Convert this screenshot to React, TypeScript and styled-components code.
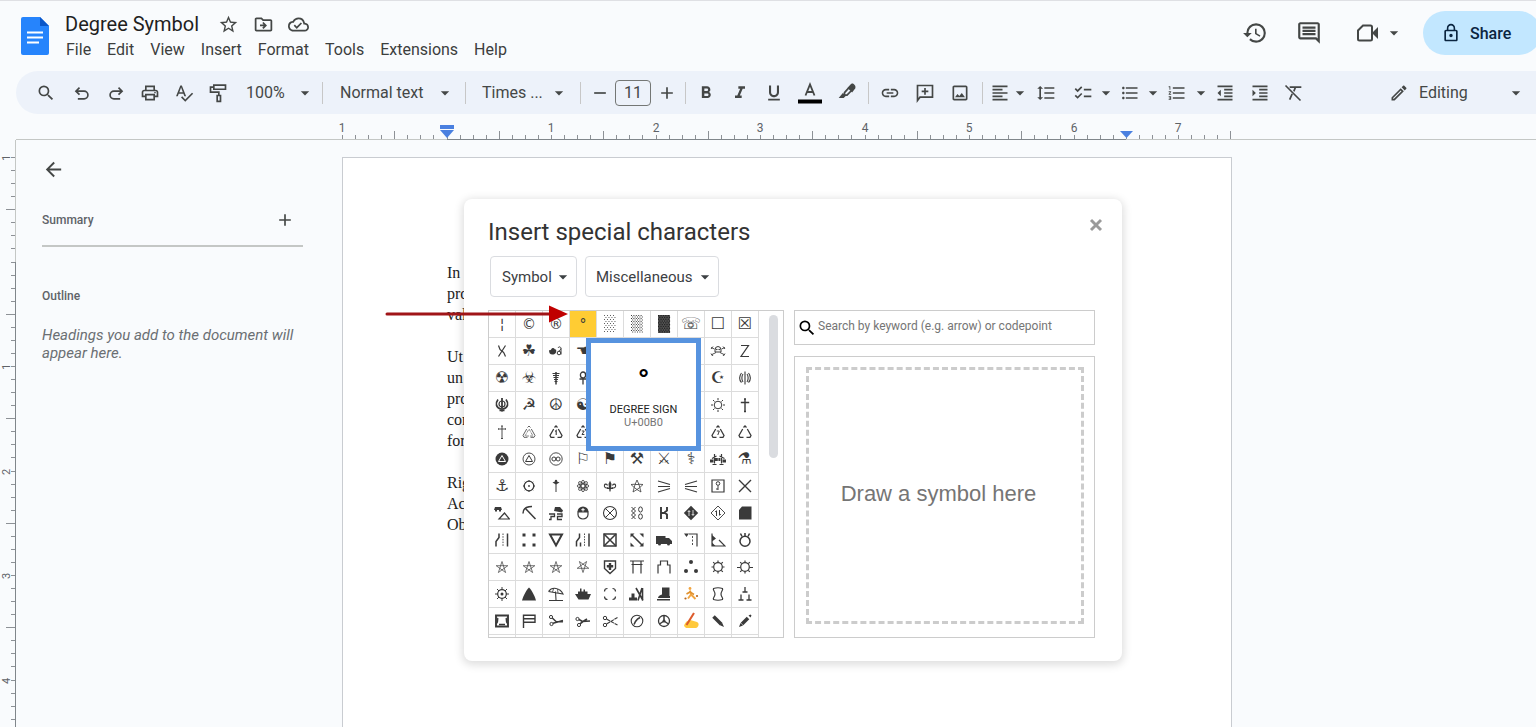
import React from "react";
import styled, { createGlobalStyle, css } from "styled-components";
import {
  MdSearch, MdOutlinePrint, MdSpellcheck, MdFormatBold, MdFormatItalic, MdFormatUnderlined,
  MdLink, MdOutlineImage, MdFormatAlignLeft, MdFormatLineSpacing, MdChecklist, MdFormatListBulleted,
  MdFormatListNumbered, MdFormatIndentDecrease, MdFormatIndentIncrease, MdOutlineEdit, MdArrowBack,
  MdAdd, MdRemove, MdArrowDropDown, MdStarBorder, MdOutlineDriveFileMove, MdOutlineCloudDone,
  MdHistory, MdOutlineComment, MdLockOutline,
} from "react-icons/md";

const GlobalStyle = createGlobalStyle`
  * { box-sizing: border-box; }
  body { margin: 0; background: #f9fbfd; font-family: Roboto, "Liberation Sans", sans-serif; color: #444746; }
  button, input, select { font: inherit; color: inherit; }
  button { border: 0; padding: 0; background: none; cursor: pointer; }
  h1, h2, h3, p { margin: 0; font-weight: 400; }
`;

/* ---------- shell ---------- */

const Shell = styled.div`
  height: 100vh;
  display: flex;
  flex-direction: column;
  overflow: hidden;
  border-top: 1px solid #dfe0e4;
`;

const Header = styled.header`
  display: flex;
  align-items: flex-start;
  height: 70px;
  flex: none;
  padding: 10px 0 0 21px;
  margin-right: -5px;
`;

const DocLogo = styled.svg`
  flex: none;
  width: 28px;
  height: 38px;
  margin: 6px 16px 0 0;
`;

const TitleBlock = styled.div`
  flex: 1;
`;

const TitleRow = styled.div`
  display: flex;
  align-items: center;
  height: 26px;
  gap: 14px;
`;

const DocTitle = styled.h1`
  font-size: 20px;
  line-height: 26px;
  color: #1f1f1f;
  margin-right: 5px;
`;

const PlainIconButton = styled.button`
  display: flex;
  align-items: center;
  justify-content: center;
  font-size: 21px;
  color: #444746;
`;

const MenuBar = styled.nav`
  display: flex;
  gap: 16px;
  padding-left: 1px;
`;

const MenuItem = styled.button`
  font-size: 16px;
  line-height: 25px;
  color: #3c3e3d;
`;

const HeaderActions = styled.div`
  display: flex;
  align-items: center;
  height: 44px;
`;

const HeaderIcon = styled(PlainIconButton)`
  width: 54px;
  font-size: 26px;
`;

const MeetButton = styled(PlainIconButton)`
  width: 52px;
  margin: 0 18px 0 17px;
  gap: 5px;
  font-size: 20px;
`;

const ShareButton = styled.button`
  display: flex;
  align-items: center;
  gap: 9px;
  width: 118px;
  height: 44px;
  padding-left: 18px;
  border-radius: 22px;
  background: #c2e7ff;
  color: #0a2540;
  font-size: 16px;
  font-weight: 500;
  svg { font-size: 20px; }
`;

/* ---------- toolbar ---------- */

const Toolbar = styled.div`
  display: flex;
  align-items: center;
  flex: none;
  height: 43px;
  margin-left: 16px;
  padding: 0 10px;
  border-radius: 22px 0 0 22px;
  background: #edf2fa;
  font-size: 16px;
`;

const Tool = styled.button<{ $w?: number }>`
  display: flex;
  align-items: center;
  justify-content: center;
  flex: none;
  width: ${(p) => p.$w ?? 34}px;
  height: 34px;
  font-size: 20px;
  color: #444746;
  svg { flex: none; }
`;

const ToolGroup = styled.div<{ $end?: number }>`
  display: flex;
  align-items: center;
  flex: none;
  padding: 0 ${(p) => p.$end ?? 3}px 0 3px;
`;

const Divider = styled.span`
  flex: none;
  width: 1px;
  height: 22px;
  background: #c7c7c7;
`;

const SelectWrap = styled.label<{ $w: number; $pad: number; $after: number; $boxed?: boolean }>`
  display: grid;
  align-items: center;
  flex: none;
  width: ${(p) => p.$w}px;
  height: 34px;
  margin-right: ${(p) => p.$after}px;
  select {
    grid-area: 1 / 1;
    appearance: none;
    width: 100%;
    height: 100%;
    border: 0;
    outline: 0;
    background: transparent;
    padding: 0 0 0 ${(p) => p.$pad}px;
  }
  svg {
    grid-area: 1 / 1;
    justify-self: end;
    pointer-events: none;
    font-size: 20px;
  }
  ${(p) =>
    p.$boxed &&
    css`
      height: 41px;
      border: 1px solid #dadce0;
      border-radius: 4px;
      font-size: 15px;
      color: #3c4043;
      svg { margin-right: 3px; }
    `}
`;

const SizeInput = styled.input`
  width: 36px;
  height: 26px;
  border: 1px solid #747775;
  border-radius: 4px;
  background: transparent;
  text-align: center;
  padding: 0;
`;

const Spacer = styled.span`
  flex: 1;
`;

/* ---------- ruler, outline, page ---------- */

const TopRuler = styled.svg`
  flex: none;
  display: block;
  width: 100%;
  height: 26px;
`;

const Workspace = styled.main`
  flex: 1;
  min-height: 0;
  display: flex;
`;

const SideRuler = styled.svg`
  flex: none;
  width: 16px;
  height: 100%;
`;

const Outline = styled.aside`
  flex: none;
  width: 326px;
  padding: 18px 39px 0 26px;
`;

const BackButton = styled(PlainIconButton)`
  font-size: 23px;
`;

const SummaryRow = styled.div`
  display: flex;
  align-items: center;
  justify-content: space-between;
  margin-top: 20px;
  height: 46px;
  padding: 0 8px 6px 0;
  border-bottom: 2px solid #c4c7c5;
`;

const SideHeading = styled.h2`
  font-size: 12px;
  line-height: 16px;
  font-weight: 500;
  color: #5f6368;
`;

const OutlineSection = styled.section`
  padding-top: 41px;
`;

const EmptyHint = styled.p`
  margin-top: 22px;
  font-size: 15px;
  line-height: 18px;
  font-style: italic;
  color: #6b6f73;
`;

const Paper = styled.article`
  position: relative;
  flex: none;
  width: 890px;
  margin-top: 17px;
  padding: 104px;
  border: 1px solid #c9ccd1;
  border-bottom: 0;
  background: #fff;
  font-family: "Liberation Serif", serif;
  font-size: 16px;
  line-height: 21px;
  color: #222;
`;

const Para = styled.p`
  margin-bottom: 21px;
`;

/* ---------- dialog ---------- */

const Dialog = styled.div`
  position: absolute;
  top: 41px;
  left: 121px;
  width: 658px;
  padding: 16px 27px 23px 24px;
  border-radius: 8px;
  background: #fff;
  box-shadow: 0 2px 9px 2px rgba(0, 0, 0, 0.13);
  font-family: Roboto, "Liberation Sans", sans-serif;
  line-height: normal;
`;

const DialogHead = styled.div`
  display: flex;
  align-items: flex-start;
  justify-content: space-between;
`;

const DialogTitle = styled.h2`
  font-size: 24px;
  line-height: 34px;
  color: #333;
`;

const CloseButton = styled(PlainIconButton)`
  margin-right: -11px;
  color: #9a9a9a;
`;

const Filters = styled.div`
  display: flex;
  gap: 8px;
  padding: 7px 2px 13px;
`;

const DialogBody = styled.div`
  display: flex;
  gap: 10px;
`;

const CharPanel = styled.div`
  display: flex;
  width: 296px;
  height: 328px;
  overflow: hidden;
  border: 1px solid #ccc;
`;

const CharGrid = styled.div`
  display: grid;
  grid-template-columns: repeat(10, 27px);
  grid-auto-rows: 27px;
`;

const Cell = styled.button<{ $active?: boolean; $large?: boolean }>`
  display: flex;
  align-items: center;
  justify-content: center;
  overflow: hidden;
  border-right: 1px solid #dcdcdc;
  border-bottom: 1px solid #dcdcdc;
  font-family: "DejaVu Sans", sans-serif;
  font-size: ${(p) => (p.$large ? 16 : 14)}px;
  line-height: 20px;
  color: #3a3a3a;
  background: ${(p) => (p.$active ? "#fc3" : "transparent")};
  svg { flex: none; width: 16px; height: 20px; }
`;

const ScrollThumb = styled.div`
  width: 9px;
  height: 143px;
  margin: 4px 0 0 10px;
  border-radius: 5px;
  background: #dadce0;
`;

const RightColumn = styled.div`
  flex: 1;
  display: flex;
  flex-direction: column;
  gap: 11px;
`;

const SearchBox = styled.label`
  display: flex;
  align-items: center;
  gap: 1px;
  height: 35px;
  padding-left: 2px;
  border: 1px solid #ccc;
  svg { flex: none; font-size: 20px; color: #000; stroke: #000; }
  input {
    flex: 1;
    min-width: 0;
    border: 0;
    outline: 0;
    padding: 0 0 3px;
    background: transparent;
    font-size: 12px;
  }
  input::placeholder { color: #757575; }
`;

const DrawBox = styled.div`
  flex: 1;
  padding: 10px 10px 13px 11px;
  border: 1px solid #ccc;
  display: flex;
`;

const DrawArea = styled.div`
  flex: 1;
  display: flex;
  align-items: center;
  justify-content: center;
  padding: 0 13px 4px 0;
  border: 3px dashed #ccc;
  font-family: "Liberation Sans", sans-serif;
  font-size: 22px;
  color: #757575;
`;

const Preview = styled.div`
  position: absolute;
  top: 139px;
  left: 122px;
  width: 115px;
  height: 113px;
  padding-top: 16px;
  border: 5px solid #5793df;
  background: #fff;
  text-align: center;
  font-size: 11px;
  line-height: 13px;
  color: #222;
`;

const PreviewGlyph = styled.div`
  height: 44px;
  font-size: 32px;
  line-height: 44px;
  font-weight: 500;
  color: #000;
`;

const CodePoint = styled.div`
  color: #757575;
`;

const Pointer = styled.svg`
  position: absolute;
  top: 104px;
  left: -79px;
  width: 184px;
  height: 22px;
  pointer-events: none;
`;

/* ---------- icons ---------- */

const Glyph = ({ children, size = 20 }: { children: React.ReactNode; size?: number }) => (
  <svg viewBox="0 0 24 24" width={size} height={size} fill="none" stroke="currentColor" strokeWidth="2" aria-hidden="true">
    {children}
  </svg>
);

const UndoIcon = () => <Glyph><path d="M7 19h7.500a4.600 4.600 0 0 0 0-9.200H5M9 5.500 4.700 9.800 9 14" /></Glyph>;
const RedoIcon = () => <Glyph><path d="M17 19H9.500a4.600 4.600 0 0 1 0-9.200H19M15 5.500l4.300 4.300L15 14" /></Glyph>;
const PaintIcon = () => <Glyph><path d="M7 2.500h14v5H7zM7 5H3v6h10v4M11 15h4v7h-4z" /></Glyph>;
const PenIcon = () => (
  <Glyph>
    <path d="M9 11.500 17 2.500q1.500-1.500 3.200.2t.2 3.300l-8.400 8.500H9z" />
    <path d="m14 6 4 4 3-4-3-4z" fill="currentColor" />
    <path d="m7 12-5 6h6l3-3z" fill="currentColor" stroke="none" />
  </Glyph>
);
const AddCommentIcon = () => <Glyph><path d="M3 21V3h18v14H6zM12 6v8M8 10h8" /></Glyph>;
const ClearIcon = () => <Glyph><path d="M3 3l18 18M8 5h14M15 5l-2 5M11 13l-3 7" /></Glyph>;
const CloseIcon = () => <Glyph><path d="m6 6 12 12M18 6 6 18" strokeWidth="3.500" /></Glyph>;
const MeetIcon = () => (
  <Glyph size={24}>
    <path d="M8 4.500h7.500A1.500 1.500 0 0 1 17 6v12a1.500 1.500 0 0 1-1.500 1.500h-11A1.500 1.500 0 0 1 3 18V9.500z" />
    <path d="m17 12 6-6v12z" fill="currentColor" stroke="none" />
  </Glyph>
);
const TextColorIcon = () => (
  <svg viewBox="0 0 24 24" width="24" height="24" aria-hidden="true">
    <path d="M7.500 14.500 12 3.500l4.500 11M9 11h6" fill="none" stroke="currentColor" strokeWidth="1.800" />
    <path d="M0 18.500h24v4H0z" fill="#000" />
  </svg>
);

/* Symbols drawn on a 16-unit grid. */
const F = { fill: "currentColor", stroke: "none" };
const pentagram = "M8 2.500 11.600 13.500 2.200 6.700H13.800L4.400 13.500z";
const triangle = "M6.500 3.500 8 2l1.500 1.500M10.300 5 14 11.500 13 13.300H9.500M6.500 13.300H3L2 11.500 5.700 5";

/* Dithered block: columns of dots, every second row offset. */
const shade = (cols: number, lines: number, dot: number) => {
  const dx = 12 / cols;
  const dy = 18 / lines;
  return Array.from({ length: lines }, (_, r) =>
    Array.from({ length: cols }, (_, c) => (
      <rect key={`${r}-${c}`} x={2 + c * dx + (r % 2 ? dx / 2 : 0)} y={-1 + r * dy} width={dot} height={dot} {...F} />
    )),
  );
};

const drawn: Record<string, React.ReactNode> = {
  shadeLight: shade(4, 9, 0.9),
  shadeMedium: shade(5, 12, 1),
  shadeDark: <><path d="M2-1h12v18H2z" fill="#555" stroke="none" /><g color="#222">{shade(5, 10, 1.3)}</g></>,
  saltire: <path d="M4.500 2.500 6 6.500M9.700 9.500l1.800 4M11.500 2.500l-7 11M6 6.500l3.700 3" strokeWidth="1.200" />,
  zed: <path d="M4 2.500h7.500L4 13.500h8" strokeWidth="1.200" />,
  skull: <><path d="M5 7a3 3.500 0 1 1 6 0v2H5z" /><circle cx="6.800" cy="6.500" r=".8" {...F} /><circle cx="9.200" cy="6.500" r=".8" {...F} /><path d="M1 4.500 4.500 6M15 4.500 11.500 6M1 12l5-2.500M15 12l-5-2.500M1 6l2-2.500M13 3.500l2 2.500M1 10.500l2 2.500M13 13l2-2.500" strokeWidth=".9" /></>,
  heart: <><path d="M1 7c2 1.500 2-2 4-2s1 2 3 1.500c1 3-1 5-3.500 5S1 10 1 7z" {...F} /><circle cx="11" cy="10" r="1.800" /><path d="M10 5c1-2 3-1 3 .5s-2 1.500-2 3M13 5.500v6" /></>,
  caduceus: <><path d="M4.500 3.500h7M5 5.500h6M5.500 7.500h5M6 9.500h4M6.500 11.500h3" strokeWidth="1.200" /><path d="M8 2v12.500" strokeWidth="1.500" /></>,
  ankh: <><ellipse cx="8" cy="5" rx="2.600" ry="3" strokeWidth="1.300" /><path d="M8 8v6.500M4.500 9h7" strokeWidth="1.300" /></>,
  farsi: <><path d="M8 1.500v13M6 4c-1.500 2-1.500 6 0 8M10 4c1.500 2 1.500 6 0 8M4.500 3C2 6 2 10 4.500 12.500M11.500 3C14 6 14 10 11.500 12.500" strokeWidth="1.100" /></>,
  khanda: <><circle cx="8" cy="7" r="3" strokeWidth="1.200" /><path d="M8 1v13.500" strokeWidth="1.800" /><path d="M4 2.500c-3 4-2 8 3 9.500M12 2.500c3 4 2 8-3 9.500M5.500 13.500h5" strokeWidth="1.700" /></>,
  sun: <><circle cx="8" cy="8" r="3.800" /><path d="M8 1v2M8 13v2M1 8h2M13 8h2M3 3l1.500 1.500M11.500 11.500 13 13M3 13l1.500-1.500M11.500 4.500 13 3" /></>,
  crossWest: <path d="M8 2v12.500M4.500 5.500h7M7 2h2M4.500 4.800v1.400M11.500 4.800v1.400M7 14.500h2" strokeWidth="1.400" />,
  crossEast: <path d="M8 2v12.500M4.500 5h7M7 2h2M4.500 4.300v1.400M11.500 4.300v1.400M7 14.500h2" strokeWidth=".9" />,
  recycleThin: <><path d={triangle} strokeWidth=".8" /><path d="M8 5 12 12H4z" strokeWidth=".6" strokeDasharray="3 1" /></>,
  recycle1: <><path d={triangle} strokeWidth="1.300" /><path d="M7.200 7.500 8.200 6.500v4.500" strokeWidth="1.100" /></>,
  recycle2: <><path d={triangle} strokeWidth="1.300" /><path d="M6.800 7h2.400L7 10.500h2.400" strokeWidth="1" /></>,
  recycle7: <><path d={triangle} strokeWidth="1.300" /><path d="M6.800 7h2.500L7.800 11" strokeWidth="1" /></>,
  recycle: <path d={triangle} strokeWidth="1.300" />,
  paperFull: <><circle cx="8" cy="8" r="6.500" {...F} /><path d="M8 4.500 11.500 10.500h-7z" stroke="#fff" /></>,
  paper: <><circle cx="8" cy="8" r="6" strokeWidth=".9" /><path d="M8 4.500 11.500 10.500h-7z" /></>,
  infinity: <><circle cx="8" cy="8" r="6.200" strokeWidth=".9" /><circle cx="5.900" cy="8" r="2" /><circle cx="10.100" cy="8" r="2" /></>,
  scales: <><path d="M4.500 3v9.500M11.500 3v9.500M2.500 13.500h4M9.500 13.500h4M2 7.500 6.500 5M9.500 5 14.500 7.500" strokeWidth="1.200" /><path d="M0 8.500h3.500v3H0zM5 7h2.800v3H5zM8.400 7h2v3h-2zM12.500 8.500H16v3h-3.500z" {...F} /></>,
  linesRight: <path d="M2 3 14 6.500M2 8.500h12M2 14 14 10.500" strokeWidth="1.200" />,
  linesLeft: <path d="M14 3 2 6.500M2 8.500h12M14 14 2 10.500" strokeWidth="1.200" />,
  atom: <g strokeWidth=".9"><ellipse cx="8" cy="8" rx="2" ry="5.800" /><ellipse cx="8" cy="8" rx="2" ry="5.800" transform="rotate(45 8 8)" /><ellipse cx="8" cy="8" rx="2" ry="5.800" transform="rotate(90 8 8)" /><ellipse cx="8" cy="8" rx="2" ry="5.800" transform="rotate(135 8 8)" /></g>,
  fleur: <><path d="M8 2.500 9.500 6 8.500 13.500H7.500L6.500 6z" {...F} /><path d="M6.500 9.500C3 11 2 8.500 2.500 7s2.500-1 3 .5M9.500 9.500c3.500 1.500 4.500-1 4-2.500s-2.500-1-3 .5M5 10.500h6" strokeWidth="1.100" /></>,
  starOutline: <path d="M8 2 9.800 6.200 14 6.500 10.800 9.500 12 14 8 11.500 4 14 5.200 9.500 2 6.500 6.200 6.200zM6 6.500l-.8 3L8 11.500l2.800-2-.8-3z" strokeWidth=".8" />,
  gear: <><circle cx="8" cy="8" r="4.800" strokeWidth="1.300" /><circle cx="8" cy="8" r=".9" {...F} /><path d="M8 2v2M8 12v2M2 8h2M12 8h2M3.800 3.800l1 1M11.200 11.200l1 1M3.800 12.200l1-1M11.200 4.800l1-1" /></>,
  staff: <><path d="M8 3v11" /><path d="M4.500 4.500 8 3l3.500 1.500L8 6.500z" {...F} /><circle cx="8" cy="3" r="1.200" {...F} /></>,
  key: <><path d="M2 2h12v12H2z" strokeWidth="1.200" /><circle cx="8" cy="5.500" r="1.800" /><path d="M8 7.500V12M8 11h-2" /></>,
  cross: <path d="m2 2 12 12M14 2 2 14" strokeWidth="1.400" />,
  slide: <><path d="M1 2h6l1 3H0zM1 5h2v1.500H1zM5 5h2v1.500H5z" {...F} /><path d="M5 14h10.500l-5-6z" strokeWidth="1.200" /></>,
  pick: <><path d="M2 8.500c0-4.500 3-7 9-7" strokeWidth="1.500" /><path d="m4 3 10.500 11" strokeWidth="1.500" /></>,
  skid: <><path d="M7 2h5l3 3.500-1 2L6 6z" {...F} /><path d="M1 9h5.500v2.500H3v3H1M9 9h5v2.500H9.500v3H14" strokeWidth="1.300" /></>,
  helmet: <><path d="M3 7h10v2.500a5 4.500 0 0 1-10 0z" strokeWidth="1.200" /><path d="M2.500 7a5.500 5.500 0 0 1 11 0z" {...F} /><path d="M8 3v3.500M6.300 4.700h3.400" stroke="#fff" /></>,
  circleX: <><circle cx="8" cy="8" r="6.500" strokeWidth="1.100" /><path d="m3.500 3.500 9 9M12.500 3.500l-9 9" /></>,
  chains: <><path d="M2.500 2l4 4-4 4 4 4M6.500 2l-4 4 4 4-4 4" /><ellipse cx="11.500" cy="4.500" rx="1.900" ry="2.600" /><ellipse cx="11.500" cy="11.500" rx="1.900" ry="2.600" /></>,
  alt: <path d="M5 2v12M5 8h4l2 1.500V14M11 2v3.500L8.500 7.500" strokeWidth="1.900" />,
  diamondFull: <><path d="m8 .8 7.200 7.200L8 15.200.8 8z" {...F} /><path d="M6 11V6M10 5v5M4.800 7 6 5.500 7.200 7M8.800 9l1.200 1.500L11.200 9" stroke="#fff" strokeWidth=".8" /></>,
  diamond: <><path d="m8 1 7 7-7 7-7-7z" strokeWidth=".9" /><path d="M6.500 11V6M9.500 5v5M5.300 7l1.200-1.500M10.700 9l-1.200 1.500" /></>,
  block: <path d="M2 14.500V5L5 1.500h9.500v13z" {...F} />,
  merge: <><path d="M2 14.500V9.500l3-4V1.500M13.500 1.500v13" strokeWidth="1.500" /><path d="M9 1.500v13" strokeDasharray="1.500 1.200" strokeWidth=".9" /></>,
  corners: <path d="M1.500 1.500h3v3h-3zM11.500 1.500h3v3h-3zM1.500 11.500h3v3h-3zM11.500 11.500h3v3h-3z" {...F} />,
  yield: <path d="M2 2.500h12L8 13.500z" strokeWidth="2" />,
  merge2: <><path d="M1.500 14.500V9.500l3-4V1.500M14 1.500v13M5.500 14.500v-4" strokeWidth="1.500" /><path d="M9.500 1.500v13" strokeDasharray="1.500 1.200" strokeWidth=".9" /></>,
  boxX: <><path d="M2 2h12v12H2z" strokeWidth="1.500" /><path d="m2 2 12 12M14 2 2 14" strokeWidth="1.500" /></>,
  fall: <><path d="M1.500 1.500h4l-4 4zM14.500 1.500v4l-4-4zM1.500 14.500v-4l4 4zM14.500 14.500h-4l4-4z" {...F} /><path d="m3 3 10 10" strokeWidth="1.600" /></>,
  truck: <><path d="M0 4h9.500v2H13l3 3v3H0z" {...F} /><circle cx="3.500" cy="12" r="1.500" {...F} /><circle cx="12.500" cy="12" r="1.500" {...F} /></>,
  lane: <><path d="M1 1.500h5L3.500 5z" {...F} /><path d="M6 2h8v12.500" strokeWidth="1.200" /><path d="M9.500 4v10.500" strokeDasharray="2 1.500" strokeWidth=".9" /></>,
  angle: <><path d="M2 1.500v12.500H15L9 8" strokeWidth="1.200" /><path d="m2 3 4 3.500-4 3zM2 10.500l3.500 3.500H2z" {...F} /></>,
  ring: <><circle cx="8" cy="9.200" r="5" strokeWidth="1.500" /><path d="M3.500 1.500 5 4.500M8 1v3M12.500 1.500 11 4.500" strokeWidth="1.500" /></>,
  star: <path d={pentagram} strokeWidth=".7" />,
  starDown: <g transform="rotate(180 8 8)"><path d={pentagram} strokeWidth=".7" /></g>,
  shield: <><path d="M2.500 2h11v7.500L8 14.500 2.500 9.500z" strokeWidth="1.400" /><path d="M8 4v7M4.800 7.200h6.400" strokeWidth="2.400" /></>,
  torii: <path d="M1 2h14M2.500 5.500h11M4 2v12.500M12 2v12.500" strokeWidth="1.200" />,
  castle: <path d="M2 14.500V6h2.500V2h7v4H14v8.500" strokeWidth="1.200" />,
  dots: <><circle cx="8" cy="3" r="2" {...F} /><circle cx="3" cy="12" r="2" {...F} /><circle cx="13" cy="12" r="2" {...F} /></>,
  cog: <><circle cx="8" cy="8" r="4.300" strokeWidth="1.200" /><path d="M8 1.500v2M8 12.500v2M1.500 8h2M12.500 8h2M3.200 3.200l1.500 1.500M11.300 11.300l1.500 1.500M3.200 12.800l1.500-1.500M11.300 4.700l1.500-1.500" strokeWidth="1.200" /></>,
  cogWide: <><circle cx="8" cy="8" r="4.300" strokeWidth="1.200" /><path d="M8 1.500v2M8 12.500v2M0 8.500h3.500M12.500 8.500H16M3.200 3.200l1.500 1.500M11.300 11.300l1.500 1.500M3.200 12.800l1.500-1.500M11.300 4.700l1.500-1.500" strokeWidth="1.200" /></>,
  lighthouse: <><circle cx="8" cy="8" r="4.300" strokeWidth="1.200" /><circle cx="8" cy="8" r="1.500" {...F} /><path d="M8 1v3M8 12v3M1 8h3M12 8h3M3 3l2 2M11 11l2 2M3 13l2-2M11 5l2-2" /></>,
  mountain: <path d="M1 14.500C2.500 9 5.500 4 8 1.500c2.500 2.500 5.500 7.500 7 13z" {...F} />,
  umbrella: <><path d="M.5 5.500C4 .5 12 1.500 15 8L.5 5.500M7.500 5.500 8 14M1 14.500h14" strokeWidth="1.100" /><path d="M5.500 3 4.500 6M9.500 3l.5 4" strokeWidth=".8" /></>,
  ferry: <><path d="M0 8h16l-2.500 5.500h-10zM3 5.500h9.500v2.500H3zM5 2.500h1.500v3H5zM8.500 3.500H10v2H8.500z" {...F} /></>,
  square: <path d="M2.500 5.500c0-2 1-3 3-3M10.500 2.500c2 0 3 1 3 3M13.500 10.500c0 2-1 3-3 3M5.500 13.500c-2 0-3-1-3-3" strokeWidth="1.200" />,
  factory: <><path d="M0 14.500v-3h2.500v-4h3v4H8v3z" {...F} /><path d="M7 2l7 12.500M13 2 9 14.500M13.500 2v12.500" strokeWidth="1.600" /></>,
  skate: <><path d="M6 1.500h7.500V10h.500v2H2c0-2 2-3 4-3.500zM1 13h13v1.500H1z" {...F} /></>,
  player: <g stroke="#f2a540" strokeWidth="1.900"><circle cx="7" cy="2.500" r="1.400" fill="#f2a540" stroke="none" /><path d="M7 4.500 8 8.500l-3 4M8 8.500l4.500 4.500" /><path d="M3.500 8 7 6l4 2.500" stroke="#e0912f" strokeWidth="1.600" /><circle cx="2.500" cy="12.500" r="1.100" fill="#b5651d" stroke="none" /><circle cx="14" cy="10" r="1.100" fill="#b5651d" stroke="none" /></g>,
  japan: <path d="M3.500 2.500c3-1 6-1 9 0 1 1.500-1.500 2.500-1.500 5.500s2.500 4 1.500 5.500c-3 1-6 1-9 0C2.500 12 5 11 5 8S2.500 4 3.500 2.500z" strokeWidth="1.200" />,
  graves: <path d="M8 1v5M5.500 6h5M4 8.500V14M1.500 14h5M12 8.500V14M9.500 14h5" strokeWidth="1.300" />,
  cup: <><path d="M2 2.500h12v11H2z" strokeWidth="1.900" /><path d="M2 10.500c2.500-.5 1-4 2-5.500M14 10.500c-2.500-.5-1-4-2-5.500M5 11.500h6" strokeWidth="1.400" /></>,
  flag: <path d="M2.500 1.500V15M2.500 2.200h11.500v7H2.500M2.500 5.700h11.500" strokeWidth="1.400" />,
  scissorsUp: <><circle cx="3" cy="4" r="1.600" /><circle cx="3.500" cy="11" r="1.600" /><path d="M4.300 5 8 8.500M5 10.300 15 7.500M8 8.500 15 8.800" strokeWidth="1.500" /></>,
  scissorsDown: <><circle cx="2.500" cy="6" r="1.600" /><circle cx="4" cy="12" r="1.600" /><path d="M4 6.500 7.500 8.500 15 8M5 10.800 8 8.500l4-2.500" strokeWidth="1.600" /></>,
  scissorsOpen: <><circle cx="3" cy="5" r="1.700" /><circle cx="3" cy="12" r="1.700" /><path d="M4.500 6 15.500 12M4.500 11 15.500 4.500" strokeWidth="1.100" strokeDasharray="4 .6" /></>,
  phoneDial: <><circle cx="8" cy="8" r="5.800" strokeWidth="1.100" /><path d="M5 11.500 6.500 8.500l2-2.500 2.500-1.500" strokeWidth="1.600" /></>,
  tape: <><circle cx="8" cy="8" r="5.500" strokeWidth="1.300" /><path d="M8 8V3M8 8l-4.500 3M8 8l4.500 3" strokeWidth="1.500" /><circle cx="8" cy="8" r="1.500" {...F} /></>,
  writing: <><path d="M1 13c1-4 4-6.500 8-5.500l5 1.500c2.500 1 2 5-1 6H3z" fill="#ffc93c" stroke="none" /><path d="M11 0 3.500 12" stroke="#dd5b2c" strokeWidth="2" /></>,
  pencilDown: <><path d="m3.500 3.500 7.500 7.500" strokeWidth="3.600" /><path d="m9.500 12 4.500 2-2-4.500z" {...F} /></>,
  pencilUp: <><path d="m5 11 6-6" strokeWidth="3.600" /><path d="m2 14 1.500-4 2.500 2.500zM11.500 2.500l2-1 1 1-1 2z" {...F} /></>,
};

/* "#" names a drawn symbol, "_" is a blank cell, anything else is shown as text. */
const rows: string[] = [
  "¦ © ® ° #shadeLight #shadeMedium #shadeDark ☏ ☐ ☒",
  "#saltire ☘ #heart ☚ _ _ _ _ #skull #zed",
  "☢ ☣ #caduceus #ankh _ _ _ _ ☪ #farsi",
  "#khanda ☭ ☮ ☯ _ _ _ _ #sun #crossWest",
  "#crossEast #recycleThin #recycle1 #recycle2 _ _ _ _ #recycle7 #recycle",
  "#paperFull #paper #infinity ⚐ ⚑ ⚒ ⚔ ⚕ #scales ⚗",
  "⚓ #gear #staff #atom #fleur #starOutline #linesRight #linesLeft #key #cross",
  "#slide #pick #skid #helmet #circleX #chains #alt #diamondFull #diamond #block",
  "#merge #corners #yield #merge2 #boxX #fall #truck #lane #angle #ring",
  "#star #star #star #starDown #shield #torii #castle #dots #cog #cogWide",
  "#lighthouse #mountain #umbrella #ferry #square #factory #skate #player #japan #graves",
  "#cup #flag #scissorsUp #scissorsDown #scissorsOpen #phoneDial #tape #writing #pencilDown #pencilUp",
  "_ _ _ _ _ _ _ _ _ _",
];
const symbols = rows.flatMap((r) => r.split(" "));

const CharCell = ({ value }: { value: string }) => {
  if (value === "_") return <Cell type="button" aria-label="Blank" />;
  const isDrawn = value[0] === "#";
  const isPictograph = value > "\u2600";
  return (
    <Cell type="button" $active={value === "°"} $large={isPictograph} aria-label={value.replace("#", "")}>
      {isDrawn ? (
        <svg viewBox="0 -2 16 20" fill="none" stroke="currentColor" strokeWidth="1" aria-hidden="true">{drawn[value.slice(1)]}</svg>
      ) : (
        value + (isPictograph ? "\uFE0E" : "")
      )}
    </Cell>
  );
};

type DropdownProps = { label: string; value: string; w: number; pad: number; after?: number; boxed?: boolean };

const Dropdown = ({ label, value, w, pad, after = 0, boxed }: DropdownProps) => (
  <SelectWrap $w={w} $pad={pad} $after={after} $boxed={boxed}>
    <select aria-label={label} defaultValue={value}><option>{value}</option></select>
    <MdArrowDropDown />
  </SelectWrap>
);

const INCH = 104.5;
const ticks = (n: number) => Array.from({ length: n }, (_, k) => ({ k, at: Math.round((k * INCH) / 8) }));

const HorizontalRuler = () => (
  <TopRuler aria-hidden="true">
    <path d="M16 25.500H4000" stroke="#c4c7c5" />
    <path d="M447 25.500H1126" stroke="#80868b" />
    {ticks(69).map(({ k, at }) => (
      <path key={k} d={`M${342.5 + at} ${k % 8 === 4 ? 17 : 21}V25`} stroke="#8d9196" />
    ))}
    {ticks(69).filter(({ k }) => k % 8 === 0 && k !== 8).map(({ k, at }) => (
      <text key={k} x={342 + at} y="18" fontSize="12" textAnchor="middle" fill="#5f6368">{Math.abs(k / 8 - 1)}</text>
    ))}
    <path d="M440 11h14v4h-14zM440 16h14l-7 8z" fill="#4a80e0" />
    <path d="M1120 17h13l-6.500 7z" fill="#4a80e0" />
  </TopRuler>
);

const VerticalRuler = () => (
  <SideRuler aria-hidden="true">
    <path d="M15.500 0V2000" stroke="#c4c7c5" />
    <path d="M15.500 122V2000" stroke="#80868b" />
    {ticks(48).map(({ k, at }) => (
      <path key={k} d={`M${k % 8 === 4 ? 6 : 11} ${17.5 + at}H15`} stroke="#8d9196" />
    ))}
    {ticks(48).filter(({ k }) => k % 8 === 0 && k !== 8).map(({ k, at }) => (
      <text key={k} transform={`translate(10 ${18 + at}) rotate(-90)`} fontSize="11" textAnchor="middle" fill="#5f6368">{Math.abs(k / 8 - 1)}</text>
    ))}
  </SideRuler>
);

const paragraphs = [
  ["In", "pro", "val"],
  ["Ut", "un", "pro", "con", "for"],
  ["Rig", "Ac", "Ob"],
];

export default function App() {
  return (
    <Shell>
      <GlobalStyle />
      <Header>
        <DocLogo viewBox="0 0 28 38" aria-hidden="true">
          <path d="M2 0h17l9 9v27a2 2 0 0 1-2 2H2a2 2 0 0 1-2-2V2a2 2 0 0 1 2-2z" fill="#2684fc" />
          <path d="M19 0l9 9h-9z" fill="#0b57c9" />
          <path d="M6 15.500h16M6 20.500h16M6 25.500h12" stroke="#fff" strokeWidth="2" />
        </DocLogo>
        <TitleBlock>
          <TitleRow>
            <DocTitle>Degree Symbol</DocTitle>
            <PlainIconButton aria-label="Star"><MdStarBorder /></PlainIconButton>
            <PlainIconButton aria-label="Move"><MdOutlineDriveFileMove /></PlainIconButton>
            <PlainIconButton aria-label="Saved to Drive"><MdOutlineCloudDone /></PlainIconButton>
          </TitleRow>
          <MenuBar>
            {["File", "Edit", "View", "Insert", "Format", "Tools", "Extensions", "Help"].map((m) => (
              <MenuItem key={m}>{m}</MenuItem>
            ))}
          </MenuBar>
        </TitleBlock>
        <HeaderActions>
          <HeaderIcon aria-label="Version history"><MdHistory /></HeaderIcon>
          <HeaderIcon aria-label="Comments"><MdOutlineComment /></HeaderIcon>
          <MeetButton aria-label="Join a call"><MeetIcon /><MdArrowDropDown /></MeetButton>
          <ShareButton><MdLockOutline />Share</ShareButton>
        </HeaderActions>
      </Header>

      <Toolbar>
        <Tool $w={39} aria-label="Search the menus"><MdSearch /></Tool>
        <Tool aria-label="Undo"><UndoIcon /></Tool>
        <Tool aria-label="Redo"><RedoIcon /></Tool>
        <Tool aria-label="Print"><MdOutlinePrint /></Tool>
        <Tool aria-label="Spelling"><MdSpellcheck /></Tool>
        <Tool aria-label="Paint format"><PaintIcon /></Tool>
        <Dropdown label="Zoom" value="100%" w={80} pad={11} after={7} />
        <Divider />
        <Dropdown label="Styles" value="Normal text" w={132} pad={17} after={10} />
        <Divider />
        <Dropdown label="Font" value="Times ..." w={103} pad={16} after={11} />
        <Divider />
        <ToolGroup>
          <Tool $w={31} aria-label="Decrease font size"><MdRemove /></Tool>
          <SizeInput aria-label="Font size" defaultValue="11" />
          <Tool $w={31} aria-label="Increase font size"><MdAdd /></Tool>
        </ToolGroup>
        <Divider />
        <ToolGroup>
          <Tool aria-label="Bold"><MdFormatBold /></Tool>
          <Tool aria-label="Italic"><MdFormatItalic /></Tool>
          <Tool aria-label="Underline"><MdFormatUnderlined /></Tool>
          <Tool $w={38} aria-label="Text color"><TextColorIcon /></Tool>
          <Tool $w={36} aria-label="Highlight color"><PenIcon /></Tool>
        </ToolGroup>
        <Divider />
        <ToolGroup $end={5}>
          <Tool $w={35} aria-label="Insert link"><MdLink /></Tool>
          <Tool $w={35} aria-label="Add comment"><AddCommentIcon /></Tool>
          <Tool $w={35} aria-label="Insert image"><MdOutlineImage /></Tool>
        </ToolGroup>
        <Divider />
        <ToolGroup>
          <Tool $w={28} aria-label="Align"><MdFormatAlignLeft /></Tool>
          <Tool $w={12} aria-label="Align options"><MdArrowDropDown /></Tool>
          <Tool $w={40} aria-label="Line spacing"><MdFormatLineSpacing /></Tool>
          <Tool aria-label="Checklist"><MdChecklist /></Tool>
          <Tool $w={12} aria-label="Checklist options"><MdArrowDropDown /></Tool>
          <Tool $w={36} aria-label="Bulleted list"><MdFormatListBulleted /></Tool>
          <Tool $w={10} aria-label="Bulleted list options"><MdArrowDropDown /></Tool>
          <Tool $w={38} aria-label="Numbered list"><MdFormatListNumbered /></Tool>
          <Tool $w={10} aria-label="Numbered list options"><MdArrowDropDown /></Tool>
          <Tool $w={38} aria-label="Decrease indent"><MdFormatIndentDecrease /></Tool>
          <Tool $w={32} aria-label="Increase indent"><MdFormatIndentIncrease /></Tool>
          <Tool aria-label="Clear formatting"><ClearIcon /></Tool>
        </ToolGroup>
        <Spacer />
        <MdOutlineEdit size={20} />
        <Dropdown label="Mode" value="Editing" w={117} pad={10} />
      </Toolbar>

      <HorizontalRuler />

      <Workspace>
        <VerticalRuler />
        <Outline>
          <BackButton aria-label="Close outline"><MdArrowBack /></BackButton>
          <SummaryRow>
            <SideHeading>Summary</SideHeading>
            <PlainIconButton aria-label="Add summary"><MdAdd size={20} stroke="currentColor" /></PlainIconButton>
          </SummaryRow>
          <OutlineSection>
            <SideHeading>Outline</SideHeading>
            <EmptyHint>Headings you add to the document will appear here.</EmptyHint>
          </OutlineSection>
        </Outline>

        <Paper>
          {paragraphs.map((lines, i) => (
            <Para key={i}>
              {lines.map((t) => <React.Fragment key={t}>{t}<br /></React.Fragment>)}
            </Para>
          ))}

          <Dialog role="dialog" aria-label="Insert special characters">
            <DialogHead>
              <DialogTitle>Insert special characters</DialogTitle>
              <CloseButton aria-label="Close"><CloseIcon /></CloseButton>
            </DialogHead>
            <Filters>
              <Dropdown label="Category" value="Symbol" w={87} pad={11} boxed />
              <Dropdown label="Subcategory" value="Miscellaneous" w={134} pad={10} boxed />
            </Filters>
            <DialogBody>
              <CharPanel>
                <CharGrid>{symbols.map((s, i) => <CharCell key={i} value={s} />)}</CharGrid>
                <ScrollThumb />
              </CharPanel>
              <RightColumn>
                <SearchBox>
                  <MdSearch />
                  <input aria-label="Search characters" placeholder="Search by keyword (e.g. arrow) or codepoint" />
                </SearchBox>
                <DrawBox><DrawArea>Draw a symbol here</DrawArea></DrawBox>
              </RightColumn>
            </DialogBody>
            <Preview>
              <PreviewGlyph>°</PreviewGlyph>
              <div>DEGREE SIGN</div>
              <CodePoint>U+00B0</CodePoint>
            </Preview>
            <Pointer viewBox="0 0 184 22" aria-hidden="true">
              <path d="M2 11h164" stroke="#a01518" strokeWidth="3" strokeLinecap="round" />
              <path d="M164 2.500v17L183 11z" fill="#c00000" />
            </Pointer>
          </Dialog>
        </Paper>
      </Workspace>
    </Shell>
  );
}
